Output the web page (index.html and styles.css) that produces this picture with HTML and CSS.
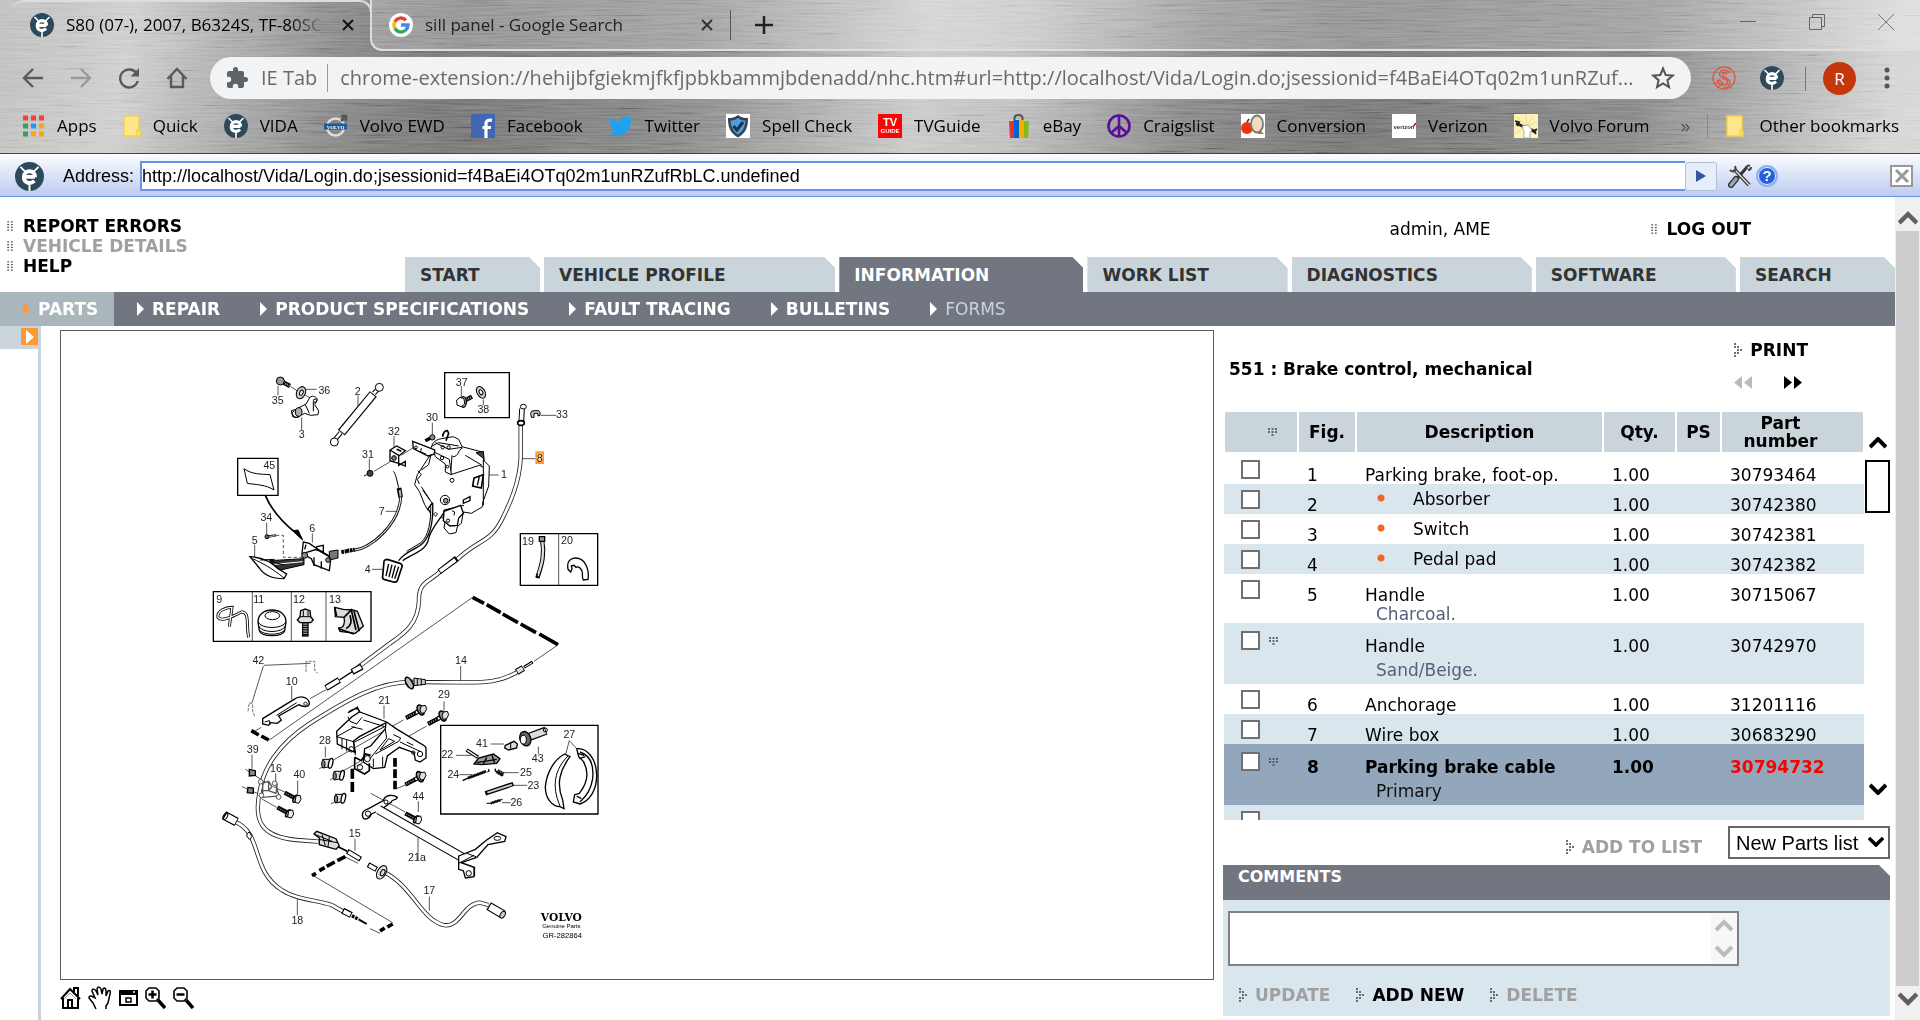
FILE: index.html
```
<!DOCTYPE html>
<html lang="en">
<head>
  <meta charset="UTF-8" />
  <meta name="viewport" content="width=device-width, initial-scale=1.0"/>
  <title>S80 (07-), 2007, B6324S, TF-80SC</title>
  <link rel="stylesheet" href="styles.css">
</head>
<body>
  <!-- shared icons -->
  <svg class="defs" aria-hidden="true">
    <defs>
      <symbol id="ie" viewBox="0 0 24 24">
        <circle cx="12" cy="12" r="12" fill="#2c4a5c"/>
        <path d="M4.500 4l4 4M19.500 4l-4 4M12 17v7" stroke="#fff" stroke-width="1.600"/>
        <path d="M7.500 12.300h9M16.500 12.500c.5-6.500-9.200-6.500-9.200 0 0 5.500 6 6 8.700 3" fill="none" stroke="#fff" stroke-width="3.200"/>
      </symbol>
      <symbol id="note" viewBox="0 0 18 22">
        <path d="M1 1h15v14.500h1V21H1z" fill="#ffe68a" stroke="#f5cf48" stroke-width="1.500"/>
        <path d="M14 20v-4.500h2.500" fill="none" stroke="#f5cf48" stroke-width="1.500"/>
      </symbol>
      <symbol id="grip" viewBox="0 0 6 12">
        <path d="M0 1h2M4 1h2M0 4h2M4 4h2M0 7h2M4 7h2M0 10h2M4 10h2" stroke="#555" stroke-width="1.500"/>
      </symbol>
      <symbol id="arr" viewBox="0 0 8 14">
        <path d="M0 1h2M0 4h2M3 4h2M3 7h2M6 7h2M3 10h2M0 10h2M0 13h2" stroke="#444" stroke-width="1.500"/>
      </symbol>
      <symbol id="down" viewBox="0 0 9 8">
        <path d="M0 1h2M3.500 1h2M7 1h2M0 4h2M3.500 4h2M7 4h2M3.500 7h2" stroke="#444" stroke-width="1.500"/>
      </symbol>
      <symbol id="chev" viewBox="0 0 18 12">
        <path d="M1 10l8-8 8 8" fill="none" stroke="currentColor" stroke-width="4"/>
      </symbol>
    </defs>
  </svg>

  <header class="chrome">
    <svg class="metal" aria-hidden="true">
      <filter id="brush" x="0" y="0" width="100%" height="100%">
        <feTurbulence type="fractalNoise" baseFrequency="0.02 0.6" numOctaves="3" seed="7"/>
        <feColorMatrix values="1.500 0 0 0 -.25  1.500 0 0 0 -.25  1.500 0 0 0 -.25  0 0 0 0 1"/>
      </filter>
      <rect width="100%" height="100%" filter="url(#brush)"/>
    </svg>
    <div class="tabstrip">
      <div class="tab active">
        <svg class="fav"><use href="#ie"/></svg>
        <span class="tab-title fade">S80 (07-), 2007, B6324S, TF-80SC</span>
        <button class="x" aria-label="Close tab"><svg width="12" height="12" viewBox="0 0 12 12"><path d="M1 1l10 10M11 1L1 11" stroke="#111" stroke-width="2"/></svg></button>
      </div>
      <div class="strip-rest">
        <div class="tab">
          <svg class="fav" viewBox="0 0 24 24">
            <circle cx="12" cy="12" r="12" fill="#fff"/>
            <g fill="none" stroke-width="3.400">
              <path d="M17 7.200A7 7 0 0 0 5.900 8.600" stroke="#ea4335"/>
              <path d="M5.900 8.600a7 7 0 0 0 0 6.800" stroke="#fbbc05"/>
              <path d="M5.900 15.400A7 7 0 0 0 16.500 17.300" stroke="#34a853"/>
              <path d="M16.500 17.300A7 7 0 0 0 19 12h-7" stroke="#4285f4"/>
            </g>
          </svg>
          <span class="tab-title">sill panel - Google Search</span>
          <button class="x" aria-label="Close tab"><svg width="12" height="12" viewBox="0 0 12 12"><path d="M1 1l10 10M11 1L1 11" stroke="#333" stroke-width="2"/></svg></button>
        </div>
        <button class="new-tab" aria-label="New tab"><svg width="18" height="18" viewBox="0 0 18 18"><path d="M9 0v18M0 9h18" stroke="#222" stroke-width="2.500"/></svg></button>
        <div class="window-buttons">
          <button aria-label="Minimize"><svg width="16" height="16" viewBox="0 0 16 16"><path d="M0 7.500h16" stroke="#666"/></svg></button>
          <button aria-label="Restore"><svg width="16" height="16" viewBox="0 0 16 16"><path d="M.5 3.500h12v12H.5zM3.500 3V.5h12v12H13" fill="none" stroke="#666"/></svg></button>
          <button aria-label="Close"><svg width="16" height="16" viewBox="0 0 16 16"><path d="M0 0l16 16M16 0L0 16" stroke="#777"/></svg></button>
        </div>
      </div>
    </div>

    <div class="toolbar">
      <button aria-label="Back"><svg viewBox="0 0 24 24"><path d="M22 12H3M12 3l-9 9 9 9" fill="none" stroke="#5a5a5a" stroke-width="2.400"/></svg></button>
      <button aria-label="Forward"><svg viewBox="0 0 24 24"><path d="M2 12h19M12 3l9 9-9 9" fill="none" stroke="#999" stroke-width="2.400"/></svg></button>
      <button aria-label="Reload"><svg viewBox="0 0 24 24"><path d="M20 8a9 9 0 1 0 .8 7" fill="none" stroke="#5a5a5a" stroke-width="2.400"/><path d="M22 2v8.500h-8.500z" fill="#5a5a5a"/></svg></button>
      <button aria-label="Home"><svg viewBox="0 0 24 24"><path d="M2.500 13L12 3l9.500 10M6 10v11h12V10" fill="none" stroke="#5a5a5a" stroke-width="2.400"/></svg></button>
      <div class="omnibox">
        <svg class="puzzle" viewBox="0 0 24 24"><path fill="#5f6368" d="M20.500 11H19V7a2 2 0 0 0-2-2h-4V3.500a2.500 2.500 0 0 0-5 0V5H4a2 2 0 0 0-2 2v3.800h1.500a2.700 2.700 0 0 1 0 5.400H2V20a2 2 0 0 0 2 2h3.800v-1.500a2.700 2.700 0 0 1 5.400 0V22H17a2 2 0 0 0 2-2v-4h1.500a2.500 2.500 0 0 0 0-5z"/></svg>
        <span class="chip">IE Tab</span>
        <span class="url">chrome-extension://hehijbfgiekmjfkfjpbkbammjbdenadd/nhc.htm#url=http://localhost/Vida/Login.do;jsessionid=f4BaEi4OTq02m1unRZuf...</span>
        <button aria-label="Bookmark this tab"><svg width="24" height="24" viewBox="0 0 24 24"><path d="M12 2.500l2.700 6.500 7 .6-5.300 4.600 1.600 6.900L12 17.400l-6 3.700 1.600-6.900L2.300 9.600l7-.6z" fill="none" stroke="#555" stroke-width="2"/></svg></button>
      </div>
      <button class="ext" aria-label="Extension"><svg viewBox="0 0 24 24"><g fill="none" stroke="#dd5a48" stroke-width="1.400"><circle cx="12" cy="12" r="11"/><path d="M17.500 7C16 3.500 8 3 7.500 8c0 5 8 3.500 8 8 0 4-6 4-9 1.500M15 8.500c-1.500-2-4.500-2-4.500 0 0 3 7.500 3.500 7.500 8 0 3-3 6-7 5.500M5 14l3 5M4 17l3.500-3 3 3-4 4"/></g></svg></button>
      <button class="ext" aria-label="IE Tab"><svg><use href="#ie"/></svg></button>
      <span class="avatar">R</span>
      <button class="menu" aria-label="Menu"><svg width="6" height="22" viewBox="0 0 6 22"><g fill="#555"><circle cx="3" cy="3" r="2.500"/><circle cx="3" cy="11" r="2.500"/><circle cx="3" cy="19" r="2.500"/></g></svg></button>
    </div>

    <nav class="bookmarks">
      <a href="#"><svg viewBox="0 0 24 24"><g stroke-width="5"><path d="M2 4h5M10 4h5M18 4h5" stroke="#f44336"/><path d="M2 12h5M2 20h5" stroke="#3a9e58"/><path d="M10 12h5" stroke="#2196f3"/><path d="M18 12h5M10 20h5M18 20h5" stroke="#f9a60a"/></g></svg>Apps</a>
      <a href="#"><svg class="slim"><use href="#note"/></svg>Quick</a>
      <a href="#"><svg><use href="#ie"/></svg>VIDA</a>
      <a href="#"><svg viewBox="0 0 24 24"><circle cx="11.500" cy="13" r="8.500" fill="#888" stroke="#ddd" stroke-width="2.500"/><path d="M17 7l5-5m-5 0h5v5" stroke="#555" stroke-width="2.500" fill="none"/><path d="M0 9.500h23v6H0z" fill="#1f5a92"/><text x="11.500" y="14.500" text-anchor="middle" class="tiny-volvo">VOLVO</text></svg>Volvo EWD</a>
      <a href="#"><svg viewBox="0 0 24 24"><path d="M0 0h24v24H0z" fill="#4267b2"/><path d="M15 24V9.500C15 6.500 17 5.800 21 6.200M11.500 13.500H20" fill="none" stroke="#fff" stroke-width="3.200"/></svg>Facebook</a>
      <a href="#"><svg viewBox="0 0 24 24"><path fill="#1da1f2" d="M23.900 4.600a10 10 0 0 1-2.800.8 4.900 4.900 0 0 0 2.100-2.700 10 10 0 0 1-3.100 1.200 4.900 4.900 0 0 0-8.400 4.500A14 14 0 0 1 1.600 3.200a4.900 4.900 0 0 0 1.500 6.500 4.900 4.900 0 0 1-2.200-.6 4.900 4.900 0 0 0 4 4.900 5 5 0 0 1-2.300.1 4.900 4.900 0 0 0 4.600 3.400A9.900 9.900 0 0 1 0 19.500 14 14 0 0 0 21.500 7a10 10 0 0 0 2.400-2.400z"/></svg>Twitter</a>
      <a href="#"><svg viewBox="0 0 24 24"><path d="M0 0h24v24H0z" fill="#fff"/><path d="M12 1c3 2.500 6 3 10 3 0 9-2 15-10 19.500C4 19 2 13 2 4c4 0 7-.5 10-3z" fill="#38424c"/><path d="M12 4c2.500 2 5 2.500 7.500 2.500C19 13 17 17.500 12 20.500 7 17.500 5 13 4.500 6.500 7 6.500 9.500 6 12 4z" fill="#4a9fe8"/><path d="M7.500 12l3.500 4 6-8" fill="none" stroke="#25313c" stroke-width="3"/></svg>Spell Check</a>
      <a href="#"><svg viewBox="0 0 24 24"><path d="M0 0h24v24H0z" fill="#fa0505"/><text x="12" y="12" text-anchor="middle" class="tiny-tv">TV</text><text x="12" y="19" text-anchor="middle" class="tiny-guide">GUIDE</text></svg>TVGuide</a>
      <a href="#"><svg viewBox="0 0 24 24"><path d="M7.500 8V4c0-4 8-4 8 0v4" fill="none" stroke="#555" stroke-width="2"/><path d="M2 7h5v17H3z" fill="#e53238"/><path d="M7 6h5v18H7z" fill="#0064d2"/><path d="M12 6h5v18h-5z" fill="#f5af02"/><path d="M17 7h5l-1 17h-4z" fill="#86b817"/></svg>eBay</a>
      <a href="#"><svg viewBox="0 0 24 24"><g fill="none" stroke="#5a0e97" stroke-width="2.600"><circle cx="12" cy="12" r="10.500"/><path d="M12 1v22M12 12l-8 7M12 12l8 7"/></g></svg>Craigslist</a>
      <a href="#"><svg viewBox="0 0 24 24"><path d="M0 0h24v24H0z" fill="#fff"/><path d="M18 15l5 5h-6z" fill="#b07a28"/><circle cx="6" cy="14" r="6" fill="#f0350e"/><path d="M6 8l2-3" stroke="#333" stroke-width="1.500"/><ellipse cx="16" cy="10" rx="6" ry="8.500" fill="#f3dcbc" stroke="#777" stroke-width="1.800"/></svg>Conversion</a>
      <a href="#"><svg viewBox="0 0 24 24"><path d="M0 0h24v24H0z" fill="#fff"/><text x="12" y="15" text-anchor="middle" class="tiny-verizon">verizon</text><path d="M21 13l3-4" stroke="#e01010" stroke-width="1.500"/></svg>Verizon</a>
      <a href="#"><svg viewBox="0 0 24 24"><path d="M0 0h24v24H0z" fill="#fbf2bd"/><path d="M12 12L2 2M12 12L20 2M12 12L1 20M12 12V1M12 12l11-4" stroke="#efdd85"/><path d="M2 9l8 4 12 5" stroke="#222" stroke-width="3" fill="none"/><path d="M1 7l4 1-2 4M23 15l-3 2 2 3" stroke="#222" stroke-width="1.800" fill="none"/><path d="M8 12l6-1 4 5-2 3v5h-6v-6z" fill="#fff" stroke="#999" stroke-width=".8"/></svg>Volvo Forum</a>
      <button class="more" aria-label="More bookmarks">»</button>
      <a class="other" href="#"><svg class="slim"><use href="#note"/></svg>Other bookmarks</a>
    </nav>
  </header>

  <form class="address">
    <svg width="29" height="29"><use href="#ie"/></svg>
    <label for="addr">Address:</label>
    <input id="addr" type="text" value="http://localhost/Vida/Login.do;jsessionid=f4BaEi4OTq02m1unRZufRbLC.undefined" />
    <button class="go" type="button" aria-label="Go"><svg width="10" height="12" viewBox="0 0 10 12"><path d="M0 0l10 6-10 6z" fill="#3456a0"/></svg></button>
    <button type="button" aria-label="Tools"><svg width="24" height="24" viewBox="0 0 24 24"><g fill="none"><path d="M19 3L8 16" stroke="#333" stroke-width="3"/><path d="M6 5l15 16" stroke="#333" stroke-width="4"/><path d="M6 5l15 16" stroke="#ddd" stroke-width="1.500"/><path d="M2 6c3 3 7 1 5-4M18 5c0-3 2-4 4-3M20 6c2 0 3-1 3-3" stroke="#444" stroke-width="2"/><path d="M8 15l-5 6" stroke="#333" stroke-width="6" stroke-linecap="round"/><path d="M8 15l-5 6" stroke="#8fa9c4" stroke-width="3.500" stroke-linecap="round"/></g></svg></button>
    <button type="button" aria-label="Help"><svg width="22" height="22" viewBox="0 0 22 22"><circle cx="11" cy="11" r="10" fill="#2460dc" stroke="#8fb0f0" stroke-width="2"/><circle cx="11" cy="11" r="8.500" fill="none" stroke="#e8f0ff"/><text x="11" y="16" text-anchor="middle" class="help-mark">?</text></svg></button>
    <button class="close-bar" type="button" aria-label="Close address bar"><svg width="14" height="14" viewBox="0 0 14 14"><path d="M1 1l12 12M13 1L1 13" stroke="#999" stroke-width="3"/></svg></button>
  </form>

  <div class="page">
    <main>
      <div class="top">
        <ul class="top-links">
          <li><svg class="grip"><use href="#grip"/></svg><a href="#">REPORT ERRORS</a></li>
          <li class="off"><svg class="grip"><use href="#grip"/></svg><a href="#">VEHICLE DETAILS</a></li>
          <li><svg class="grip"><use href="#grip"/></svg><a href="#">HELP</a></li>
        </ul>
        <div class="top-right">
          <div class="user">
            <span>admin, AME</span>
            <a class="logout" href="#"><svg class="grip"><use href="#grip"/></svg>LOG OUT</a>
          </div>
          <nav class="tabs">
            <a href="#">START</a>
            <a href="#">VEHICLE PROFILE</a>
            <a class="current" href="#">INFORMATION</a>
            <a href="#">WORK LIST</a>
            <a href="#">DIAGNOSTICS</a>
            <a href="#">SOFTWARE</a>
            <a href="#">SEARCH</a>
          </nav>
        </div>
      </div>

      <nav class="subnav">
        <a class="current" href="#">PARTS</a>
        <a href="#">REPAIR</a>
        <a href="#">PRODUCT SPECIFICATIONS</a>
        <a href="#">FAULT TRACING</a>
        <a href="#">BULLETINS</a>
        <a class="off" href="#">FORMS</a>
      </nav>

      <div class="work">
        <div class="gutter">
          <button aria-label="Expand tree"><svg width="8" height="14" viewBox="0 0 8 14"><path d="M0 0l8 7-8 7z" fill="#fff"/></svg></button>
        </div>

        <section class="viewer">
          <div class="sheet">
            <svg class="diagram" viewBox="0 0 1260 1830" role="img" aria-label="Brake control, mechanical">
              <defs>
                <path id="cable8" d="M962 250V355C958 430 930 490 905 540C870 610 830 600 770 660L720 695C690 725 655 725 657 780C655 850 615 880 570 910L470 985"/>
                <path id="cable14" d="M962 990C900 1030 850 1028 770 1027L650 1026C540 1020 440 1080 330 1150C230 1215 190 1290 180 1350C160 1440 180 1490 290 1500L355 1505"/>
                <path id="cable17" d="M550 1595C640 1640 660 1735 730 1755C780 1765 790 1690 840 1688L865 1695"/>
                <path id="cable18" d="M105 1445C190 1480 150 1590 245 1650C290 1680 350 1680 395 1695L430 1715"/>
                <path id="cable7" d="M602 470C600 550 510 630 460 630"/>
                <g id="bolt"><path d="M0 0l34-18" stroke-width="13"/><path d="M3-2l28-15" stroke="#999" stroke-width="5" stroke-dasharray="3 4"/><path d="M28-15l12-7" stroke-width="13"/><path d="M30-16l9-5" stroke="#fff" stroke-width="7"/><ellipse cx="44" cy="-24" rx="9" ry="16" fill="#999" stroke-width="5" transform="rotate(-25 44 -24)"/><path d="M46-36l12-2 4 10-6 12-10 2-4-10z" fill="#ddd"/></g>
                <g id="screw"><path d="M0 0l32 17" stroke-width="13"/><path d="M3 2l26 14" stroke="#999" stroke-width="4" stroke-dasharray="3 4"/><ellipse cx="32" cy="18" rx="5" ry="12" fill="#999" stroke-width="4" transform="rotate(30 32 18)"/><path d="M34 10l12-2 3 12-7 12-11-3z" fill="#eee"/></g>
                <g id="nut"><path d="M-14-12h22l8 4-8 18-22 4z" fill="#ddd"/><ellipse cx="10" cy="0" rx="6" ry="15" fill="#fff" stroke-width="4" transform="rotate(14 10 0)"/><ellipse cx="-12" cy="2" rx="5" ry="11" fill="#888"/></g>
              </defs>
              <g class="line">
                <!-- boxes -->
                <g class="box">
                  <path d="M734 98h194v135H734zM113 355h121v111H113zM961 581h232v155H961zM40 755h473v149H40zM722 1156h472v266H722z"/>
                </g>
                <path d="M1076 581v155M157 755v149M274 755v149M378 755v149" stroke-width="2"/>
                <path d="M132 386c24 18 52 16 78 18l12 46c-24-16-54-16-80-20z"/>
                <!-- leaders -->
                <g stroke-width="2">
                  <path d="M234 138v28M317 148h33M305 232v38M474 166v36M784 138v36M850 178v18M1022 226h46M697 248v36M582 288v34M508 356v36M522 394l54-32M604 346l34-22M866 405h30M966 356h40M557 514h34M200 548v36M164 614v38M337 580v28M516 688h32M272 140l22 14M316 166l16 8"/>
                  <path d="M228 586h22v66h60" stroke-dasharray="10 7"/>
                  <path d="M818 772L208 1200M1072 916l-70 48M192 976l140-6M190 978l-34 110M275 1038v40M782 978v46M330 1076l50-28M160 1176l24-14M552 1096v40M732 1084v28M376 1220v32M156 1244v42M227 1300v30M293 1322v42M655 1384v32M465 1496v36M654 1560v-68M688 1670v42M292 1678v48M342 1608l236 140M430 1548l44 22M136 1288l60 38M126 1340l60 26M220 1340l34 16M184 1376l46 26M358 1286l20-10M400 1260l210-120M410 1304l70-40M470 1278l210-120M390 1320l20-12M392 1392l20-10M590 1346l28-12M512 1360l104 56M872 1212h40M768 1246h46M778 1304h40M910 1298h46M938 1336h44M906 1388h26M1015 1220v22M1108 1202l-12 44M1108 1202l24 26M510 1766l30 14"/>
                </g>
                <!-- thick alignment bars -->
                <g class="bar">
                  <path d="M818 772l34 18M860 794l42 24M908 822l46 26M962 852l46 26M1018 882l56 32M154 1172l22 13M184 1188l22 12M436 1550l-24 12M404 1566l-24 13M374 1583l-16 9M348 1600l-12 7M578 1752l-16 9M554 1764l-14 9"/>
                  <path d="M457 1286v30M457 1326v30M585 1254v26M585 1288v26M585 1322v26"/>
                </g>
                <path d="M196 466c18 44 46 76 90 112l20 18" stroke-width="5"/>
                <path d="M278 572l30 28-14-30z" fill="#000"/>
                <!-- cables -->
                <use href="#cable8" class="out"/><use href="#cable8" class="in"/>
                <use href="#cable14" class="out"/><use href="#cable14" class="in"/>
                <use href="#cable17" class="out"/><use href="#cable17" class="in"/>
                <use href="#cable18" class="out"/><use href="#cable18" class="in"/>
                <use href="#cable7" class="out thin"/><use href="#cable7" class="in thin"/>
                <path d="M770 655l-52 40M966 206l-2 40" stroke-width="17"/><path d="M766 659l-46 35M966 206l-2 36" stroke="#fff" stroke-width="11"/>
                <ellipse cx="970" cy="200" rx="9" ry="7" fill="#fff"/><ellipse cx="963" cy="249" rx="10" ry="7" fill="#fff" stroke-width="5"/>
                <path d="M992 220q2-10 12-8h12q6 4 4 14l-6 2v-8h-12v12h-8z" fill="#ccc"/>
                <!-- 35, 36, 3 -->
                <path d="M244 124l26 14" stroke-width="13"/><path d="M250 128l18 9" stroke="#aaa" stroke-width="6" stroke-dasharray="3 3"/>
                <circle cx="241" cy="123" r="12" fill="#999"/>
                <ellipse cx="303" cy="158" rx="13" ry="19" fill="#ccc" transform="rotate(25 303 158)"/><ellipse cx="304" cy="158" rx="5" ry="8" fill="#fff" transform="rotate(25 304 158)"/>
                <path d="M288 208l30-16 12-20c8-8 22 0 22 8l-8 14 12 18-2 12-22 2-18-6-24 12-12-2-4-18z" fill="#fff"/>
                <ellipse cx="296" cy="216" rx="10" ry="13" fill="#aaa"/><path d="M316 194l12 26M340 186v28M284 212l-8 6 6 14h14" /><circle cx="345" cy="182" r="5"/>
                <!-- 2 -->
                <path d="M424 278L520 162" stroke-width="27"/><path d="M426 276L518 164" stroke="#fff" stroke-width="20"/>
                <path d="M404 300l18-22M522 160l16-18" stroke-width="14"/><path d="M404 300l18-22M522 160l16-18" stroke="#fff" stroke-width="8"/>
                <circle cx="403" cy="306" r="12" fill="#fff"/><circle cx="538" cy="142" r="12" fill="#fff"/>
                <!-- 37, 38 -->
                <path d="M790 184l26-14" stroke-width="13"/><path d="M794 182l20-11" stroke="#aaa" stroke-width="6" stroke-dasharray="3 3"/>
                <ellipse cx="790" cy="186" rx="9" ry="16" fill="#bbb" stroke-width="4"/><path d="M770 180l10-8 12 4 2 16-10 8-13-5z" fill="#fff"/>
                <ellipse cx="843" cy="157" rx="12" ry="19" fill="#ccc" transform="rotate(-30 843 157)"/><ellipse cx="843" cy="157" rx="5" ry="8" fill="#fff" transform="rotate(-30 843 157)"/>
                <!-- 30, 31, 32 -->
                <path d="M676 302l16-8" stroke-width="10"/><circle cx="697" cy="292" r="8" fill="#888"/>
                <ellipse cx="510" cy="400" rx="9" ry="9" fill="#444"/><path d="M492 408l8-4"/>
                <path d="M570 330l20-12 26 14-20 16v28l20-12v14l-20-8-26-8zM570 330l26 16" fill="#fff" stroke-width="4"/><circle cx="582" cy="354" r="7" fill="#777"/><path d="M590 328l14 6" stroke-width="5"/>
                <!-- 1 pedal box -->
                <path d="M694 340c-4-24 6-40 30-44l36-6 16 8 10 22 60 16 8 28 14 14-2 60-18 50v12l-34 20-24-4-6 34-12 10-4 18-20 4-16-18 4-24-18-14-24 2-20-34-16-40-14-20 8-30z" fill="#fff"/>
                <path d="M664 390l22-16 8-34M850 356v140M752 404l86-28 12 6M756 346l-4 56M696 318l20-10 60 10M758 350c20 0 14-20 30-26M846 376l-50-30M706 308l40 20 40-6M654 392l10 12-12 14 6 14M664 440l26 40M732 510l60-14M668 450l36 50"/>
                <path d="M638 304l16 6 50 20v12l-20 6-44-22z" fill="#fff" stroke-width="4"/><circle cx="648" cy="322" r="4"/><path d="M664 324l-2 12 16 6"/>
                <path d="M702 336l46 22 6 46-18-8v-24l-30-22z" fill="#fff"/><circle cx="742" cy="380" r="4"/><circle cx="726" cy="354" r="5"/>
                <path d="M728 290c2-16 8-18 14-18l4 8-8 22" stroke-width="5"/><circle cx="728" cy="322" r="5"/><circle cx="746" cy="322" r="5"/>
                <path d="M822 414l28-10-6 40-26-6z" stroke-width="5"/><path d="M838 410l-6 26M790 480l20-10v12l-20 8z" stroke-width="4"/><circle cx="756" cy="421" r="6"/>
                <path d="M828 338l22-4 2 22z" fill="#444"/>
                <path d="M684 508l14-22 30 12 4 22-50 70-8 40-70 24-10 10V660l56-36z" fill="#fff" stroke="none"/>
                <path d="M698 488c2 50-4 96-30 122-20 20-50 22-72 52M732 518c-20 30-40 50-46 78-8 40-50 44-78 66M698 488l-14 18 8 14M732 510v12" stroke-width="4"/>
                <path d="M692 492c2 50-6 100-32 118l-40 24M706 518a5 5 0 1 0 1 0"/>
                <circle cx="735" cy="480" r="14" fill="#fff"/><circle cx="737" cy="482" r="7" fill="#999"/>
                <path d="M732 514l50-18 8 24-14 14-4 22-22 2-20-16z" fill="#fff" stroke-width="4"/><circle cx="744" cy="542" r="5"/><path d="M756 512l8 4-2 10"/>
                <!-- 4 pad -->
                <path d="M552 664q2-6 10-6l38 12q8 4 6 10l-14 42q-4 6-12 4l-28-8q-6-2-4-10z" fill="#fff" stroke-width="5"/><path d="M566 672l-8 36M576 674l-9 37M586 676l-10 38M596 680l-12 36" stroke-width="4"/>
                <!-- 7 ends -->
                <path d="M580 394c6 4 12 30 18 60"/><path d="M597 444l5 28" stroke-width="14"/><path d="M599 450l3 20" stroke="#bbb" stroke-width="6"/>
                <path d="M424 636l16-2M440 633l24-4" stroke-width="12" stroke-dasharray="8 2"/>
                <!-- 34, 5, 6 -->
                <path d="M202 590l26-4" stroke-width="7"/><path d="M204 590l22-3" stroke="#ccc" stroke-width="3"/><circle cx="201" cy="590" r="6" fill="#666"/>
                <path d="M208 662l104-6v18l-70 16z" fill="#333"/><path d="M214 674l94-9" stroke="#fff"/>
                <path d="M150 650c40 2 66 18 84 36l26 16-8 14c-30 0-60-10-74-32z" fill="#fff" stroke-width="4"/><path d="M158 656c30 14 60 30 94 58M180 660l44-2M214 664l40 12" />
                <path d="M388 634l26-4v24l-26 6z" fill="#777"/>
                <path d="M310 606l18 4 26 18 30 18 8 12-4 34-46-18-8-18-28-16z" fill="#fff" stroke-width="4"/><path d="M310 640l40-12 34 20M350 620l20-4v20l-20-6zM342 652v26M364 664v22M318 614l-4 14" stroke-width="4"/><circle cx="314" cy="646" r="9" fill="#888"/><circle cx="384" cy="660" r="7" fill="#888"/>
                <!-- 19, 20 -->
                <path d="M1026 598c8 40 2 70-14 116" stroke-width="13"/><path d="M1027 604c6 38 0 66-14 104" stroke="#ddd" stroke-width="7"/><path d="M1018 590h16v14h-16zM1012 700l-2 14" fill="#999" stroke-width="4"/>
                <path d="M1104 688c-6-30 16-38 34-32 20 8 30 34 26 62l-14 2c-6-10 0-16-4-26-4-12-12-16-18-12l-6-6-8 2 2 8-4 10z" fill="#fff" stroke-width="4"/>
                <!-- 9, 11, 12, 13 -->
                <path d="M88 860l8-58c-20 0-46 12-42 30 10 14 40 0 70-16 26-2 14 40 22 76" stroke-width="9"/><path d="M88 860l8-58c-20 0-46 12-42 30 10 14 40 0 70-16 26-2 14 40 22 76" stroke="#fff" stroke-width="4"/>
                <path d="M174 846c0-24 20-36 42-36s42 12 42 36l-4 26c-8 20-68 20-76 0z" fill="#fff" stroke-width="4"/><path d="M174 846c10 22 74 22 84 0M176 858c10 22 70 22 80 0M180 872c12 14 60 14 72 0"/><ellipse cx="217" cy="827" rx="22" ry="12"/>
                <path d="M316 846v44" stroke-width="20"/><path d="M316 850v36" stroke="#999" stroke-width="13" stroke-dasharray="4 3"/><path d="M302 812l14-5 14 5 2 18 8 10-8 8h-32l-8-8 8-10z" fill="#ddd" stroke-width="4"/><path d="M300 830h32M310 812v18M324 812v18"/>
                <path d="M404 802l26 6 28 2 14 4 18 44-24 22-46-6-4-10c16 0 20-16 16-32l-26-2z" fill="#ddd" stroke-width="4"/><path d="M432 832l22-22 14 60M462 814l16 60M416 866l46 16M404 802l6 26M450 826c6 20 4 30-12 40" stroke-width="5"/>

                <!-- 42, 10 -->
                <path d="M318 996v-32h26v26l8 10M144 1114l4-26 10 4v22l6 14" stroke="#777" stroke-dasharray="10 3"/>
                <path d="M188 1136l94-58c20-14 44-6 46 12 0 12-18 12-32 4l-60 34 8 12-12 10-20-2-6 8-18-4z" fill="#fff" stroke-width="4"/><path d="M194 1146l14-4 2 12M230 1126l60-38M316 1086a5 5 0 1 0 1 0"/>
                <path d="M378 1044l40-24M456 996l30-16" stroke-width="19"/><path d="M380 1043l36-22M459 994l24-13" stroke="#fff" stroke-width="12"/><path d="M418 1020l40-26" stroke-width="4"/>
                <!-- 14 ends -->
                <path d="M950 996l20-12" stroke-width="20"/><path d="M952 995l16-10" stroke="#ddd" stroke-width="13"/><path d="M972 982l26-16" stroke-width="9"/><path d="M974 981l22-13" stroke="#fff" stroke-width="3"/>
                <ellipse cx="628" cy="1029" rx="9" ry="19" fill="#bbb" stroke-width="5" transform="rotate(-30 628 1029)"/><path d="M642 1014l34 5v14l-34 4z" fill="#ccc"/><path d="M652 1014v22M664 1018v18"/>
                <!-- 21 bracket -->
                <path d="M444 1118q14-12 30-12l6 10 80 30 28 20 86 52 4 6v30l-18 12-14-6-4-22-44-16-36 26-8 34-34 4-30-20 4-40 18-8 44-52 2-18-80 42-18 14 6 34-54-26-2-38 46-44 22-14-6-14-10 6z" fill="#fff" stroke-width="4"/>
                <path d="M490 1140l64 20-90 46-54-16M556 1168l4 26-50 62M580 1184l22 10-6 10-70 38M566 1196l18 8-44 26zM444 1130l6 14 20 8 16-20M426 1194v34M440 1200v34M462 1208l4 38M600 1206l60 28M520 1256v26M548 1250v34M620 1206l20 10M454 1160l34 8M410 1190l54-30" />
                <path d="M464 1252v34l30 16 14-10v-22M464 1252l20 10 12-20 16 4" fill="none" stroke-width="5"/>
                <circle cx="454" cy="1228" r="8"/><circle cx="480" cy="1282" r="8"/><circle cx="502" cy="1256" r="9"/><circle cx="660" cy="1242" r="8"/><circle cx="640" cy="1238" r="5"/>
                <use href="#bolt" x="618" y="1134"/><use href="#bolt" x="684" y="1152"/><use href="#bolt" x="616" y="1334"/>
                <use href="#nut" x="382" y="1270"/><use href="#nut" x="416" y="1306"/><use href="#nut" x="420" y="1375"/>
                <!-- 39, 16, 40 -->
                <path d="M148 1288l18 4v14l-18 2zM144 1342l16 2v16l-18-2z" fill="#888" stroke-width="4"/>
                <path d="M186 1330l20-6 10 16-10 12 22 8 4-30M188 1332v40l50-4-10-30M206 1324v28M190 1352h16" fill="none" stroke="#555" stroke-width="4"/><circle cx="182" cy="1325" r="7" fill="#fff" stroke="#555"/><circle cx="184" cy="1366" r="7" fill="#fff" stroke="#555"/><circle cx="236" cy="1371" r="7" fill="#fff" stroke="#555"/><circle cx="224" cy="1330" r="7" fill="#fff" stroke="#555"/>
                <use href="#screw" x="254" y="1358"/><use href="#screw" x="232" y="1402"/><use href="#screw" x="616" y="1420"/>
                <!-- 21a -->
                <path d="M488 1430c-4-14 4-20 18-24l44-24c4-18 30-20 42-10-4 12-16 4-18 14l-32 24-28 12c-6 16-24 20-26 8z" fill="#fff" stroke-width="4"/><circle cx="504" cy="1421" r="8"/><circle cx="558" cy="1386" r="6"/>
                <path d="M536 1409l252 144" stroke-width="28"/><path d="M532 1407l258 147" stroke="#fff" stroke-width="22"/>
                <path d="M776 1548l50-20 34-28 32-22 26 12-4 14-50 10-34 38-46 16 38 14v28l-26 4-6-22-14-4z" fill="#fff" stroke-width="4"/><ellipse cx="892" cy="1495" rx="10" ry="6"/><circle cx="806" cy="1600" r="8"/><path d="M776 1570l46-24M800 1540l28 10M824 1580v28"/>
                <!-- 15, 17, 18 ends -->
                <path d="M342 1482l8-8 58 22 10 22-10 10-50-14v-20z" fill="#ddd" stroke-width="4"/><path d="M356 1498l56 10M366 1484l10 32M388 1490l-4 30M346 1484l50 20"/>
                <path d="M414 1520l28 14" stroke-width="5"/><path d="M442 1534l40 24M504 1574l26 14" stroke-width="16"/><path d="M445 1536l34 20M507 1576l20 11" stroke="#fff" stroke-width="10"/>
                <ellipse cx="545" cy="1597" rx="13" ry="22" fill="#ddd" transform="rotate(30 545 1597)"/><ellipse cx="548" cy="1598" rx="6" ry="10" transform="rotate(30 548 1598)"/>
                <path d="M866 1698l44 26" stroke-width="27"/><path d="M869 1700l38 22" stroke="#fff" stroke-width="20"/><ellipse cx="908" cy="1724" rx="7" ry="11" fill="#ccc" transform="rotate(30 908 1724)"/>
                <path d="M72 1426l38 20" stroke-width="27"/><path d="M76 1428l32 17" stroke="#fff" stroke-width="20"/><ellipse cx="76" cy="1429" rx="6" ry="10" transform="rotate(30 76 1429)"/><path d="M142 1480l6-4 8 14-8 8-8-10z" fill="#fff"/>
                <path d="M428 1712l26 13" stroke-width="19"/><path d="M431 1714l20 10" stroke="#fff" stroke-width="12"/><path d="M456 1727l20 11" stroke-width="10" stroke-dasharray="8 3"/><path d="M476 1738l24 14" stroke-width="6"/>
                <!-- brake shoe box -->
                <path d="M984 1192l54-20" stroke-width="25"/><path d="M986 1191l50-18" stroke="#ddd" stroke-width="18"/><ellipse cx="976" cy="1196" rx="16" ry="22" fill="#666" stroke-width="4" transform="rotate(-20 976 1196)"/><ellipse cx="970" cy="1199" rx="9" ry="13" fill="#fff"/><circle cx="1036" cy="1170" r="6"/>
                <path d="M916 1216l26-12 10 8-2 12-24 6-12-6z" fill="#ddd" stroke-width="4"/><path d="M932 1208v18"/>
                <path d="M800 1230l34 22" stroke-width="11"/><path d="M802 1231l30 20" stroke="#fff" stroke-width="4"/><path d="M822 1272l14-18 44-12 20 14-10 14-44 4z" fill="#999" stroke-width="4"/><path d="M850 1272l10-20M876 1246l8 24M830 1268l60-10" stroke-width="4"/>
                <path d="M788 1322l12-6M800 1316l58-22M862 1296q10-4 2-8" stroke-width="4"/><path d="M804 1314l54-20" stroke-width="9" stroke-dasharray="4 1"/>
                <path d="M886 1286q-2 8 6 10M890 1296l20 10" stroke-width="4"/><path d="M892 1294l18 10" stroke-width="14" stroke-dasharray="4 1"/>
                <path d="M856 1360l84-28" stroke-width="13"/><path d="M862 1358l74-24" stroke="#ccc" stroke-width="6"/>
                <path d="M860 1390h12l30-10 6-2" stroke-width="3"/><path d="M872 1390l30-10" stroke-width="8" stroke-dasharray="4 1"/>
                <path d="M1094 1242l16 8c-30 40-42 80-22 130l4 26-12-6c-20 0-44-20-44-60 4-46 30-84 58-98z" fill="#fff" stroke-width="4"/><path d="M1104 1248c-40 40-50 90-24 150"/>
                <path d="M1130 1226c30-4 60 30 60 80 0 44-20 76-50 86l-20-6 4-22 14-4c24-30 32-60 12-96l-14-14z" fill="#fff" stroke-width="4"/><path d="M1140 1236c30 10 42 40 38 80-4 30-20 54-38 70M1132 1240l20 6M1138 1256l18-6M1130 1368l14 8" stroke-width="4"/>
              </g>
              <rect x="1006" y="334" width="26" height="38" fill="#ff9933"/>
              <rect x="1011" y="341" width="16" height="24" fill="#ffd9a8"/>
              <g class="num">
                <text x="373" y="161">36</text><text x="233" y="192">35</text><text x="305" y="293">3</text><text x="473" y="164">2</text>
                <text x="785" y="137">37</text><text x="850" y="219">38</text><text x="1086" y="234">33</text><text x="696" y="244">30</text>
                <text x="582" y="284">32</text><text x="504" y="353">31</text><text x="1019" y="365">8</text><text x="912" y="415">1</text>
                <text x="208" y="388">45</text><text x="545" y="524">7</text><text x="199" y="542">34</text><text x="337" y="577">6</text>
                <text x="164" y="611">5</text><text x="503" y="698">4</text><text x="984" y="614">19</text><text x="1101" y="613">20</text>
                <text x="58" y="788">9</text><text x="176" y="788">11</text><text x="297" y="788">12</text><text x="405" y="788">13</text>
                <text x="175" y="971">42</text><text x="783" y="971">14</text><text x="275" y="1035">10</text><text x="553" y="1091">21</text>
                <text x="732" y="1075">29</text><text x="375" y="1211">28</text><text x="158" y="1239">39</text><text x="228" y="1296">16</text>
                <text x="298" y="1315">40</text><text x="846" y="1222">41</text><text x="742" y="1255">22</text><text x="1013" y="1267">43</text>
                <text x="1108" y="1194">27</text><text x="760" y="1315">24</text><text x="978" y="1307">25</text><text x="1000" y="1346">23</text>
                <text x="949" y="1399">26</text><text x="655" y="1379">44</text><text x="464" y="1490">15</text><text x="651" y="1562">21a</text>
                <text x="688" y="1662">17</text><text x="292" y="1751">18</text>
              </g>
              <text class="volvo" x="1084" y="1742">VOLVO</text>
              <text class="genuine" x="1084" y="1765">Genuine Parts</text>
              <text class="gr" x="1087" y="1794">GR-282864</text>
            </svg>
          </div>
          <div class="viewer-tools">
            <button aria-label="Home view"><svg width="21" height="22" viewBox="0 0 21 22"><path d="M1 12L10 2l10 10M3 11v10h15V11M8 21v-8h4v8M14 5V1h4v8" fill="none" stroke="#000" stroke-width="2"/><path d="M4 12l6-6 6 6" fill="none" stroke="#999"/></svg></button>
            <button aria-label="Pan"><svg width="24" height="24" viewBox="0 0 24 24"><path d="M8 23l-3-6-4-5c0-3 3-2 4-1l2 1-3-7c0-3 3-2 4 0l2 4-1-6c1-3 3-2 4 0l1 5 1-5c2-2 3 0 3 2v5l2-5c2-1 3 0 2 3l-2 9-2 3v3" fill="none" stroke="#000" stroke-width="1.500"/></svg></button>
            <button aria-label="Fit window"><svg width="19" height="16" viewBox="0 0 19 16"><path d="M1 1h17v14H1z" fill="#fff" stroke="#000" stroke-width="2"/><path d="M1 3h17" stroke="#000" stroke-width="4"/><path d="M14 2h2" stroke="#fff" stroke-width="1.500"/><path d="M7 8h5v4H7z" fill="none" stroke="#000" stroke-width="1.500"/></svg></button>
            <button aria-label="Zoom in"><svg width="21" height="22" viewBox="0 0 21 22"><path d="M4 1h7l3 3v7l-3 3H4l-3-3V4z" fill="none" stroke="#000" stroke-width="1.600"/><path d="M7.500 3.500v8M3.500 7.500h8" stroke="#000" stroke-width="2.500"/><path d="M13 13l7 8" stroke="#000" stroke-width="3.500"/></svg></button>
            <button aria-label="Zoom out"><svg width="21" height="22" viewBox="0 0 21 22"><path d="M4 1h7l3 3v7l-3 3H4l-3-3V4z" fill="none" stroke="#000" stroke-width="1.600"/><path d="M3.500 7.500h8" stroke="#000" stroke-width="2.500"/><path d="M13 13l7 8" stroke="#000" stroke-width="3.500"/></svg></button>
          </div>
        </section>

        <aside class="panel">
          <div class="panel-head">
            <h1>551 : Brake control, mechanical</h1>
            <div class="panel-actions">
              <a href="#"><svg class="arr"><use href="#arr"/></svg>PRINT</a>
              <div class="pager">
                <button aria-label="Previous"><svg width="18" height="13" viewBox="0 0 18 13"><path d="M8 0v13L0 6.500zM18 0v13l-8-6.500z" fill="#bbb"/></svg></button>
                <button aria-label="Next"><svg width="18" height="13" viewBox="0 0 18 13"><path d="M0 0v13l8-6.500zM10 0v13l8-6.500z" fill="#000"/></svg></button>
              </div>
            </div>
          </div>

          <div class="parts">
            <div class="parts-list">
              <table>
                <colgroup><col class="c-check"><col class="c-fig"><col class="c-desc"><col class="c-qty"><col class="c-ps"><col class="c-num"></colgroup>
                <thead>
                  <tr><th class="sort"><svg class="dots"><use href="#down"/></svg></th><th>Fig.</th><th>Description</th><th>Qty.</th><th>PS</th><th>Part number</th></tr>
                </thead>
                <tbody>
                  <tr><td><input type="checkbox" aria-label="Select 30793464"></td><td>1</td><td>Parking brake, foot-op.</td><td>1.00</td><td></td><td>30793464</td></tr>
                  <tr class="blue"><td><input type="checkbox" aria-label="Select 30742380"></td><td>2</td><td class="child">Absorber</td><td>1.00</td><td></td><td>30742380</td></tr>
                  <tr><td><input type="checkbox" aria-label="Select 30742381"></td><td>3</td><td class="child">Switch</td><td>1.00</td><td></td><td>30742381</td></tr>
                  <tr class="blue"><td><input type="checkbox" aria-label="Select 30742382"></td><td>4</td><td class="child">Pedal pad</td><td>1.00</td><td></td><td>30742382</td></tr>
                  <tr><td><input type="checkbox" aria-label="Select 30715067"></td><td>5</td><td>Handle<small>Charcoal.</small></td><td>1.00</td><td></td><td>30715067</td></tr>
                  <tr class="blue tall"><td><input type="checkbox" aria-label="Select 30742970"><svg class="dots"><use href="#down"/></svg></td><td></td><td>Handle<small>Sand/Beige.</small></td><td>1.00</td><td></td><td>30742970</td></tr>
                  <tr><td><input type="checkbox" aria-label="Select 31201116"></td><td>6</td><td>Anchorage</td><td>1.00</td><td></td><td>31201116</td></tr>
                  <tr class="blue"><td><input type="checkbox" aria-label="Select 30683290"></td><td>7</td><td>Wire box</td><td>1.00</td><td></td><td>30683290</td></tr>
                  <tr class="tall selected"><td><input type="checkbox" aria-label="Select 30794732"><svg class="dots"><use href="#down"/></svg></td><td>8</td><td>Parking brake cable<small>Primary</small></td><td>1.00</td><td></td><td class="red">30794732</td></tr>
                  <tr class="blue next"><td><input type="checkbox" aria-label="Select next part"></td><td></td><td>Pedal</td><td></td><td></td><td></td></tr>
                </tbody>
              </table>
            </div>
            <div class="parts-scroll">
              <svg width="18" height="12"><use href="#chev"/></svg>
              <div class="thumb"></div>
              <svg class="flip" width="18" height="12"><use href="#chev"/></svg>
            </div>
          </div>

          <div class="list-row">
            <button class="act off"><svg class="arr"><use href="#arr"/></svg>ADD TO LIST</button>
            <div class="select">
              <select aria-label="Parts list"><option>New Parts list</option></select>
              <svg class="flip" width="16" height="11"><use href="#chev"/></svg>
            </div>
          </div>

          <section class="comments">
            <h2>COMMENTS</h2>
            <div class="comments-body">
              <div class="note">
                <textarea aria-label="Comment"></textarea>
                <div class="note-scroll">
                  <svg width="18" height="14"><use href="#chev"/></svg>
                  <svg class="flip" width="18" height="14"><use href="#chev"/></svg>
                </div>
              </div>
              <div class="comment-actions">
                <button class="act off"><svg class="arr"><use href="#arr"/></svg>UPDATE</button>
                <button class="act"><svg class="arr"><use href="#arr"/></svg>ADD NEW</button>
                <button class="act off"><svg class="arr"><use href="#arr"/></svg>DELETE</button>
              </div>
            </div>
          </section>
        </aside>
      </div>
    </main>
    <div class="page-scroll">
      <svg width="20" height="17"><use href="#chev"/></svg>
      <div class="page-thumb"></div>
      <svg class="flip" width="20" height="17"><use href="#chev"/></svg>
    </div>
  </div>
</body>
</html>
```
FILE: styles.css
```
* {
  box-sizing: border-box;
}
body {
  margin: 0;
  min-height: 100vh;
  display: flex;
  flex-direction: column;
  font-family: "DejaVu Sans", Verdana, sans-serif;
  font-size: 17px;
  line-height: 18px;
  color: #000;
  background: #fff;
}
a {
  color: inherit;
  text-decoration: none;
}
button {
  border: 0;
  padding: 0;
  background: none;
  font: inherit;
  color: inherit;
  display: flex;
  align-items: center;
  justify-content: center;
}
svg {
  display: block;
  flex: none;
}
.defs {
  position: absolute;
  width: 0;
  height: 0;
}
.flip {
  transform: rotate(180deg);
}

/* browser frame */
.chrome {
  position: relative;
  height: 154px;
  border-bottom: 1px solid #444;
  font-family: "Open Sans", "Segoe UI", sans-serif;
  background: linear-gradient(100deg, #bdbdbd 0%, #cdcdcd 7%, #868686 18%, #747474 24%, #868686 36%, #c8c8c8 48%, #bebebe 53%, #868686 62%, #747474 70%, #868686 85%, #d4d4d4 98%);
}
.metal {
  position: absolute;
  inset: 0;
  width: 100%;
  height: 100%;
  opacity: 0.4;
  mix-blend-mode: soft-light;
}
.tabstrip {
  position: relative;
  height: 51px;
  display: flex;
  padding-left: 12px;
  font-size: 17px;
}
.tab {
  display: flex;
  align-items: center;
}
.tab.active {
  width: 360px;
  height: 40px;
  margin-right: -2px;
  padding: 8px 16px 0 18px;
  border: 2px solid #ddd;
  border-width: 2px 2px 0 0;
  border-radius: 12px 12px 0 0;
}
.fav {
  width: 24px;
  height: 24px;
  margin-right: 12px;
}
.tab-title {
  white-space: nowrap;
  overflow: hidden;
  line-height: 24px;
}
.fade {
  width: 260px;
  -webkit-mask-image: linear-gradient(90deg, #000 86%, transparent);
  mask-image: linear-gradient(90deg, #000 86%, transparent);
}
.tab .x {
  margin-left: auto;
}
.strip-rest {
  flex: 1;
  display: flex;
  align-items: center;
  border: 2px solid #ddd;
  border-width: 0 0 2px 2px;
  border-radius: 0 0 0 12px;
  background: rgba(255, 255, 255, 0.22);
}
.strip-rest .tab {
  width: 359px;
  height: 30px;
  padding: 0 17px;
  border-right: 1px solid #555;
}
.strip-rest .tab-title {
  color: #222;
}
.new-tab {
  margin-left: 24px;
}
.window-buttons {
  margin-left: auto;
  margin-bottom: 6px;
  padding-right: 26px;
  display: flex;
  gap: 53px;
}

.toolbar {
  position: relative;
  height: 54px;
  display: flex;
  align-items: center;
  padding: 0 30px 0 21px;
  gap: 24px;
}
.toolbar > button svg {
  width: 24px;
  height: 24px;
}
.omnibox {
  flex: 1;
  height: 42px;
  margin: 0 -3px;
  border-radius: 21px;
  background: #f1f3f4;
  display: flex;
  align-items: center;
  padding: 0 16px 0 15px;
  font-size: 20px;
  line-height: 28px;
  color: #6a6a6a;
}
.puzzle {
  width: 24px;
  height: 24px;
  margin-right: 12px;
}
.chip {
  border-right: 1px solid #999;
  padding-right: 10px;
  margin-right: 12px;
  white-space: nowrap;
}
.url {
  flex: 1;
  white-space: nowrap;
  overflow: hidden;
}
.avatar {
  position: relative;
  width: 33px;
  height: 33px;
  margin-left: 15px;
  border-radius: 50%;
  background: #c4370d;
  color: #fff;
  text-align: center;
  line-height: 33px;
}
.avatar::before {
  content: "";
  position: absolute;
  left: -18px;
  top: 5px;
  height: 24px;
  border-left: 1px solid #777;
}
.toolbar .menu {
  margin-left: 4px;
}
.toolbar .menu svg {
  width: 6px;
}

.bookmarks {
  position: relative;
  height: 42px;
  display: flex;
  align-items: center;
  padding: 0 21px;
  gap: 26px;
  font-size: 17px;
  line-height: 24px;
  white-space: nowrap;
}
.bookmarks a {
  display: flex;
  align-items: center;
  gap: 12px;
}
.bookmarks svg {
  width: 24px;
  height: 24px;
}
.bookmarks svg.slim {
  width: 18px;
  height: 22px;
}
.more {
  margin-left: auto;
  color: #555;
  font-size: 20px;
}
.bookmarks .other {
  gap: 15px;
  border-left: 1px solid #888;
  padding-left: 18px;
  margin-left: -9px;
}
.tiny-volvo {
  font: bold 5px "Liberation Serif", serif;
  fill: #fff;
}
.tiny-tv {
  font: bold 11px "Liberation Sans", sans-serif;
  fill: #fff;
}
.tiny-guide {
  font: bold 6px "Liberation Sans", sans-serif;
  fill: #fff;
}
.tiny-verizon {
  font: bold 6px "Liberation Sans", sans-serif;
  fill: #333;
}

/* IE Tab address bar */
.address {
  height: 43px;
  display: flex;
  align-items: center;
  padding: 2px 7px 0 15px;
  border-bottom: 1px solid #6b92e6;
  background: linear-gradient(#fbfdff, #dbe4f7 50%, #bccbef);
  font: 18px "Liberation Sans", Arial, sans-serif;
}
.address label {
  margin: 0 6px 0 19px;
}
.address input {
  flex: 1;
  height: 30px;
  padding: 0;
  border: 2px solid #6b92e6;
  border-right: 0;
  background: #fff;
  font: inherit;
  color: #000;
}
.go {
  width: 32px;
  height: 29px;
  border: 1px solid #b6c0d4;
  border-radius: 3px;
  background: #e6edfb;
}
.address .go {
  margin-right: 11px;
}
.address .go ~ button {
  margin-right: 4px;
}
.address .close-bar {
  width: 23px;
  height: 22px;
  border: 2px solid #999;
  background: #fff;
}
.address .go ~ .close-bar {
  margin: 0 0 0 108px;
}
.help-mark {
  font: bold 15px "Liberation Sans", sans-serif;
  fill: #fff;
}

/* page */
.page {
  flex: 1;
  display: flex;
}
main {
  flex: 1;
  min-width: 0;
  display: flex;
  flex-direction: column;
}
.page-scroll {
  width: 25px;
  display: flex;
  flex-direction: column;
  align-items: center;
  gap: 4px;
  padding: 13px 0;
  background: #f0f0f0;
  color: #606060;
}
.page-thumb {
  flex: 1;
  width: 23px;
  background: #cdcdcd;
}
.top {
  display: flex;
  font-weight: bold;
}
.top-links {
  width: 405px;
  margin: 0;
  padding: 19px 0 0 7px;
  list-style: none;
  line-height: 20px;
}
.top-links li,
.logout {
  display: flex;
  align-items: center;
  gap: 10px;
}
.grip {
  width: 6px;
  height: 11px;
}
.top-links .off,
.act.off {
  color: #a0a0a0;
}
.top-right {
  flex: 1;
}
.user {
  height: 60px;
  display: flex;
  align-items: center;
  justify-content: flex-end;
  gap: 160px;
  padding: 4px 144px 0 0;
}
.user span {
  font-weight: normal;
}
.tabs {
  display: grid;
  grid-template-columns: 135fr 291fr 244fr 200fr 240fr 200fr 155fr;
  gap: 4px;
}
.tabs a {
  height: 35px;
  padding-left: 15px;
  line-height: 37px;
  color: #333;
  background: #c9d5db;
  clip-path: polygon(0 0, calc(100% - 11px) 0, 100% 11px, 100% 100%, 0 100%);
}
.tabs .current {
  background: #727680;
  color: #fff;
}
.subnav {
  display: flex;
  gap: 40px;
  height: 34px;
  background: #727680;
  color: #fff;
  font-weight: bold;
  line-height: 32px;
}
.subnav a {
  display: flex;
  align-items: center;
  gap: 8px;
}
.subnav a::before {
  content: "";
  border: 7px solid transparent;
  border-left-color: #fff;
  border-right-width: 0;
}
.subnav .current {
  width: 114px;
  margin-right: -17px;
  padding-left: 23px;
  background: #a9b6bc;
}
.subnav .current::before {
  border-left-color: #ff9933;
}
.subnav .off {
  color: #c9d5db;
  font-weight: normal;
}

.work {
  flex: 1;
  display: flex;
}
.gutter {
  width: 41px;
  padding-top: 2px;
  border-right: 3px solid #c9d5db;
  background: linear-gradient(#c9d5db, #c9d5db) 0 0 / 100% 23px no-repeat;
}
.gutter button {
  width: 17px;
  height: 17px;
  margin-left: 21px;
  background: #ff9933;
}
.viewer {
  flex: 1;
  display: flex;
  flex-direction: column;
  padding: 4px 9px 8px 19px;
}
.sheet {
  flex: 1;
  border: 1px solid #5c5c5c;
  padding: 9px 0 0 139px;
}
.diagram {
  width: 420px;
  height: 610px;
}
.viewer-tools {
  display: flex;
  align-items: center;
  gap: 7px;
  height: 32px;
  padding-top: 4px;
}

/* diagram strokes */
.line {
  fill: none;
  stroke: #000;
  stroke-width: 3;
}
.box {
  stroke-width: 4;
}
.bar {
  stroke-width: 11;
}
.out {
  stroke: #222;
  stroke-width: 13;
}
.in {
  stroke: #fff;
  stroke-width: 8;
}
.out.thin {
  stroke-width: 9;
}
.in.thin {
  stroke-width: 3;
}
.num {
  font: 32px "Liberation Sans", Arial, sans-serif;
  fill: #222;
  text-anchor: middle;
}
.volvo {
  font: bold 32px "DejaVu Serif", serif;
  text-anchor: middle;
}
.genuine {
  font: 18px "Liberation Sans", Arial, sans-serif;
  text-anchor: middle;
}
.gr {
  font: 23px "Liberation Sans", Arial, sans-serif;
  text-anchor: middle;
}

/* parts panel */
.panel {
  width: 672px;
  padding-right: 5px;
}
.panel-head {
  display: flex;
  justify-content: space-between;
  height: 86px;
  padding: 15px 82px 0 6px;
}
.panel h1 {
  margin: 19px 0 0;
  font-size: 17px;
  line-height: 18px;
}
.panel-actions a,
.act {
  display: flex;
  align-items: center;
  gap: 8px;
  font-weight: bold;
}
.arr {
  width: 8px;
  height: 14px;
}
.pager {
  display: flex;
  gap: 32px;
  margin-top: 17px;
}
.parts {
  display: flex;
  height: 408px;
}
.parts-list {
  flex: 1;
  overflow: hidden;
}
table {
  width: 100%;
  table-layout: fixed;
  border-collapse: collapse;
}
.c-check {
  width: 74px;
}
.c-fig {
  width: 58px;
}
.c-qty {
  width: 73px;
}
.c-ps {
  width: 45px;
}
.c-num {
  width: 143px;
}
th {
  height: 41px;
  padding: 1px 12px;
  background: #c9d5db;
  border: solid #fff;
  border-width: 0 2px 2px;
}
th:nth-child(2),
th:nth-child(5) {
  padding: 0;
}
th:last-child {
  padding-right: 36px;
}
.sort .dots {
  margin: 0 8px 0 auto;
}
td {
  height: 30px;
  padding: 12px 0 0 9px;
  vertical-align: top;
}
td:first-child {
  padding: 6px 0 0 17px;
}
td input {
  appearance: none;
  float: left;
  width: 19px;
  height: 19px;
  margin: 0 9px 0 0;
  border: 2px solid #707070;
  background: #fff;
}
.dots {
  width: 9px;
  height: 8px;
  margin-top: 6px;
}
small {
  display: block;
  padding-left: 11px;
  margin-top: 1px;
  font-size: 17px;
  color: #56607a;
}
.blue {
  background: #dae6ed;
}
td.child {
  padding: 6px 0 0 57px;
  background: radial-gradient(circle at 25px 14px, #f26522 3px, transparent 4px);
}
.tall td {
  height: 61px;
  padding-top: 14px;
}
.tall td:first-child {
  padding-top: 8px;
}
.tall small {
  margin-top: 6px;
}
.next td:nth-child(3) {
  padding-top: 14px;
}
.selected {
  background: #93a7bc;
  font-weight: bold;
}
.selected small {
  font-weight: normal;
  color: #111;
}
.red {
  color: #f00;
}
.parts-scroll {
  width: 25px;
  display: flex;
  flex-direction: column;
  align-items: center;
  padding: 25px 0;
}
.thumb {
  width: 25px;
  height: 53px;
  margin: 11px 0 auto;
  border: 2px solid #000;
}
.list-row {
  display: flex;
  justify-content: flex-end;
  align-items: center;
  gap: 26px;
  height: 45px;
}
.list-row .act {
  padding-top: 8px;
}
.select {
  position: relative;
  width: 162px;
}
.select select {
  appearance: none;
  width: 100%;
  height: 33px;
  padding: 0 6px;
  border: 2px solid #666;
  border-radius: 0;
  background: #fff;
  font: 20px "Liberation Sans", Arial, sans-serif;
  color: #000;
}
.select svg {
  position: absolute;
  right: 6px;
  top: 10px;
  pointer-events: none;
}
.comments h2 {
  margin: 0;
  height: 35px;
  padding: 3px 15px;
  font-size: 16px;
  line-height: 18px;
  color: #fff;
  background: #727680;
  clip-path: polygon(0 0, calc(100% - 11px) 0, 100% 11px, 100% 100%, 0 100%);
}
.comments-body {
  padding: 11px 5px 12px;
  background: #dae6ed;
}
.note {
  display: flex;
  width: 511px;
  height: 55px;
  border: 2px solid #828282;
  background: #fff;
}
.note textarea {
  flex: 1;
  border: 0;
  resize: none;
  background: none;
}
.note-scroll {
  width: 26px;
  display: flex;
  flex-direction: column;
  align-items: center;
  justify-content: space-between;
  padding: 6px 0;
  background: #f7f7f7;
  color: #bbb;
}
.comment-actions {
  display: flex;
  gap: 26px;
  padding: 20px 11px 0;
}
```
